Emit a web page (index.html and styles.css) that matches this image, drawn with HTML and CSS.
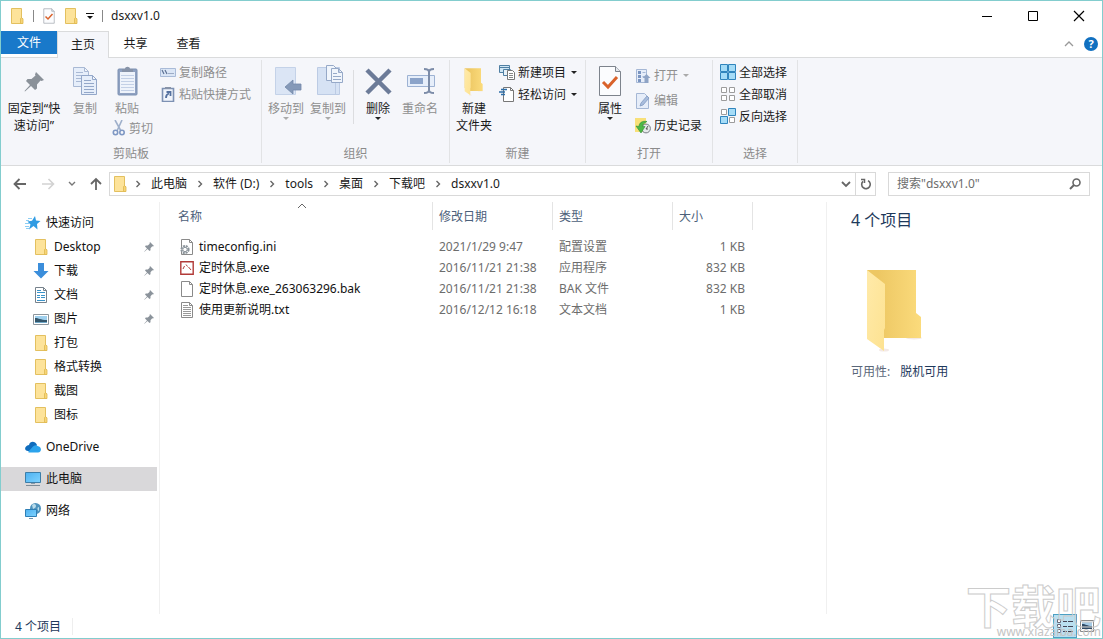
FILE: index.html
```html
<!DOCTYPE html>
<html lang="zh-CN">
<head>
    <meta charset="UTF-8">
    <meta name="viewport" content="width=device-width, initial-scale=1.0">
    <title>dsxxv1.0</title>
    <link rel="stylesheet" href="styles.css">
</head>
<body>
    <!-- shared icons -->
    <svg class="sprite" aria-hidden="true">
        <defs>
            <linearGradient id="gFolder" x1="0" y1="0" x2="1" y2="0">
                <stop offset="0.200" stop-color="#edc763"/>
                <stop offset="1" stop-color="#fbdb7c"/>
            </linearGradient>
            <linearGradient id="gFlap" x1="0" y1="0" x2="1" y2="1">
                <stop offset="0" stop-color="#ffeaa9"/>
                <stop offset="1" stop-color="#fde291"/>
            </linearGradient>
            <linearGradient id="gScreen" x1="0" y1="0" x2="1" y2="1">
                <stop offset="0" stop-color="#4db1f0"/>
                <stop offset="1" stop-color="#7fd3ff"/>
            </linearGradient>
            <symbol id="folder" viewBox="0 0 16 16">
                <path d="M2.500.500h10v9.500l1 1v4.500h-11z" fill="#fde39a" stroke="#e3c05f"/>
                <path d="M11.500 15v-4.500l1-.7 1.500 1v4.700h-2.500z" fill="#f7d578" stroke="#deb74f" stroke-width=".8"/>
            </symbol>
            <symbol id="bigfolder" viewBox="0 0 60 84">
                <ellipse cx="49" cy="69" rx="8" ry="1.500" fill="#f3e9e6"/>
                <ellipse cx="19" cy="81" rx="5" ry="1.500" fill="#f3e9e6"/>
                <path d="M2 1h49v43l5 4v21H18L2 60z" fill="url(#gFolder)"/>
                <path d="M2 1l18 14v44l-1 2v21L2 70z" fill="url(#gFlap)"/>
            </symbol>
            <symbol id="pin" viewBox="0 0 20 20">
                <path d="M12 0l8 8-2.500 1-1-.5-3.500 4v4l-2 1.500-4-4-6 5.500-.5-.5L6 13 2 9l1.500-2h4l4-3.500-.5-1z" fill="currentColor"/>
            </symbol>
            <symbol id="chevron" viewBox="0 0 8 8">
                <path d="M2.500 1l3 3-3 3" fill="none" stroke="currentColor" stroke-width="1.400"/>
            </symbol>
            <symbol id="page" viewBox="0 0 14 16">
                <path d="M1.500.5h8l3 3v12h-11z" fill="#fff" stroke="#8a8a8a"/>
                <path d="M9.500.5v3h3" fill="none" stroke="#8a8a8a"/>
            </symbol>
            <symbol id="check" viewBox="0 0 24 32">
                <path d="M1.500 1.500h16l5 5v24h-21z" fill="#fbfcfe" stroke="#7d838c"/>
                <path d="M17.500 1.500v5h5" fill="#e4e8ee" stroke="#7d838c"/>
                <path d="M5 17l5 5 9-10" fill="none" stroke="#d9622b" stroke-width="3"/>
            </symbol>
        </defs>
    </svg>

    <div class="window">
        <header class="titlebar">
            <svg class="ico" width="16" height="16"><use href="#folder"/></svg>
            <span class="bar"></span>
            <button class="quick" aria-label="属性"><svg width="14" height="16"><use href="#check"/></svg></button>
            <button class="quick" aria-label="新建文件夹"><svg width="16" height="16"><use href="#folder"/></svg></button>
            <button class="quick" aria-label="自定义快速访问工具栏">
                <svg width="8" height="8" viewBox="0 0 8 8"><path d="M0 1h8v1H0zM1 4h6L4 7z" fill="#111"/></svg>
            </button>
            <span class="bar"></span>
            <h1 class="title">dsxxv1.0</h1>
            <div class="window-buttons">
                <button aria-label="最小化"><svg width="12" height="12" viewBox="0 0 12 12"><path d="M1 6.500h10" stroke="#000"/></svg></button>
                <button aria-label="最大化"><svg width="12" height="12" viewBox="0 0 12 12"><path d="M1.500 1.500h9v9h-9z" fill="none" stroke="#000"/></svg></button>
                <button aria-label="关闭"><svg width="12" height="12" viewBox="0 0 12 12"><path d="M1 1l10 10M11 1L1 11" stroke="#000" stroke-width="1.200"/></svg></button>
            </div>
        </header>

        <nav class="tabs">
            <button class="tab file">文件</button>
            <button class="tab active">主页</button>
            <button class="tab">共享</button>
            <button class="tab">查看</button>
            <div class="tabs-right">
                <button aria-label="最小化功能区"><svg width="10" height="8" viewBox="0 0 10 8"><path d="M1 6l4-4 4 4" fill="none" stroke="#999" stroke-width="1.300"/></svg></button>
                <button class="help" aria-label="帮助">?</button>
            </div>
        </nav>

        <div class="ribbon">
            <section class="group">
                <div class="group-body">
                    <button class="big wide">
                        <svg width="32" height="32" viewBox="0 0 32 32" color="#8a9199"><use href="#pin" x="6" y="7" width="20" height="20"/></svg>
                        <span>固定到“快<br>速访问”</span>
                    </button>
                    <button class="big" disabled>
                        <svg width="32" height="32" viewBox="0 0 32 32">
                            <g fill="#e6eefa" stroke="#a9b9d4">
                                <path d="M4.500 2.500h11l4 4v15h-15zM15.500 2.500v4h4"/>
                                <path d="M7 7.500h7M7 10.500h9M7 13.500h9M7 16.500h9"/>
                                <path d="M12.500 10.500h11l4 4v15h-15zM23.500 10.500v4h4" stroke="#93a7c9"/>
                                <path d="M15 15.500h7M15 18.500h10M15 21.500h10M15 24.500h10M15 27.500h10" stroke="#93a7c9"/>
                            </g>
                        </svg>
                        <span>复制</span>
                    </button>
                    <div class="paste">
                        <button class="big" disabled>
                            <svg width="32" height="32" viewBox="0 0 32 32">
                                <rect x="7" y="4" width="19" height="26" rx="1" fill="#8fa1c1" stroke="#7d91b3"/>
                                <path d="M9 7h15v21H9z" fill="#eef3fb"/>
                                <path d="M10 10.500h13M10 13.500h13M10 16.500h13M10 19.500h13M10 22.500h13M10 25.500h13" stroke="#c3d0e6"/>
                                <path d="M11 7V4h3c0-3 5-3 5 0h3v3z" fill="#8793a8"/>
                            </svg>
                            <span>粘贴</span>
                        </button>
                        <button class="small" disabled>
                            <svg width="14" height="16" viewBox="0 0 14 16"><path d="M3 0l6 11M10 0L5 11" stroke="#9fb0cb" stroke-width="1.600"/><circle cx="3.500" cy="12.500" r="2.200" fill="none" stroke="#7f98c4" stroke-width="1.600"/><circle cx="10" cy="12.500" r="2.200" fill="none" stroke="#7f98c4" stroke-width="1.600"/></svg>
                            剪切
                        </button>
                    </div>
                    <div class="stack clip">
                        <button class="small" disabled>
                            <svg width="16" height="16" viewBox="0 0 16 16"><path d="M.5 4.500h15v8H.5z" fill="#dbe6f6" stroke="#a9bbd8"/><path d="M2 6l2 4M5 6l2 4" stroke="#5f7396" stroke-width="1.200"/><path d="M8.500 9.500h1M10.500 9.500h1M12.500 9.500h1" stroke="#5f7396"/></svg>
                            复制路径
                        </button>
                        <button class="small" disabled>
                            <svg width="16" height="16" viewBox="0 0 16 16"><path d="M2.500 2.500h11v13h-11z" fill="#f0f4fb" stroke="#7d91b3" stroke-width="1.600"/><path d="M5 1h6v2H5z" fill="#8793a8"/><path d="M6 12c0-3 1-4 3-4.500M6.500 6h4v4" fill="none" stroke="#55719f" stroke-width="1.800"/></svg>
                            粘贴快捷方式
                        </button>
                    </div>
                </div>
                <h2 class="group-name">剪贴板</h2>
            </section>

            <section class="group tight">
                <div class="group-body">
                    <button class="big" disabled>
                        <svg width="32" height="32" viewBox="0 0 32 32"><path d="M5.500 2.500h20v27h-20z" fill="#dbe5f5" stroke="#c4d2e8"/><path d="M15 22l8-7v4h8v6h-8v4z" fill="#8599b8" stroke="#7489aa" stroke-width=".8"/></svg>
                        <span>移动到</span>
                        <i class="caret"></i>
                    </button>
                    <button class="big" disabled>
                        <svg width="32" height="32" viewBox="0 0 32 32"><path d="M5.500 2.500h22v27h-22z" fill="#d6e2f4" stroke="#bccbe4"/><path d="M23.500 18v11" stroke="#bccbe4"/><g fill="#f0f5fc" stroke="#96a9c8"><path d="M14.500.5h7l3 3v12h-10z"/><path d="M19.500 3.500h7l4 4v10h-11zM26.500 3.500v4h4M21 8.500h4M21 11.500h8M21 14.500h8"/></g></svg>
                        <span>复制到</span>
                        <i class="caret"></i>
                    </button>
                    <span class="divider"></span>
                    <button class="big">
                        <svg width="32" height="32" viewBox="0 0 32 32"><path d="M5 5l23 23M28 5L5 28" stroke="#6c7b98" stroke-width="4.500"/></svg>
                        <span>删除</span>
                        <i class="caret"></i>
                    </button>
                    <button class="big" disabled>
                        <svg width="32" height="32" viewBox="0 0 32 32"><path d="M3.500 10.500h27v11h-27z" fill="#e6eefa" stroke="#9db2d3"/><path d="M6 13h13v6H6z" fill="#8ba3c9"/><path d="M20 4c4 0 5 1 5 3v18c0 2-1 3-5 3M30 4c-4 0-5 1-5 3v18c0 2 1 3 5 3" fill="none" stroke="#7c8ca8" stroke-width="2"/></svg>
                        <span>重命名</span>
                    </button>
                </div>
                <h2 class="group-name">组织</h2>
            </section>

            <section class="group tight">
                <div class="group-body">
                    <button class="big">
                        <svg width="32" height="32" viewBox="0 0 32 32"><use href="#bigfolder" x="5" y="3" width="22" height="28"/></svg>
                        <span>新建<br>文件夹</span>
                    </button>
                    <div class="stack">
                        <button class="small">
                            <svg width="16" height="16" viewBox="0 0 16 16"><path d="M.5 1.500h10v7H.5z" fill="#cfe6f5" stroke="#4f7fa3"/><path d="M.5 3.500h10" stroke="#4f7fa3"/><path d="M4.500 5.500h7v6h-7z" fill="#e8f2f9" stroke="#4f7fa3"/><path d="M8.500 6.500h5l2 2v7h-7z" fill="#fff" stroke="#777"/><path d="M10 9.500h4M10 11.500h4M10 13.500h4" stroke="#888"/></svg>
                            新建项目 <i class="caret"></i>
                        </button>
                        <button class="small">
                            <svg width="16" height="16" viewBox="0 0 16 16"><path d="M4.500 1.500h7l3 3v11h-10z" fill="#fff" stroke="#777"/><path d="M11.500 1.500v3h3" fill="none" stroke="#777"/><path d="M2 3.500h6M0 6h6M2 8.500h4" stroke="#2f6fa8" stroke-width="1.400"/></svg>
                            轻松访问 <i class="caret"></i>
                        </button>
                    </div>
                </div>
                <h2 class="group-name">新建</h2>
            </section>

            <section class="group">
                <div class="group-body">
                    <button class="big">
                        <svg width="24" height="32"><use href="#check"/></svg>
                        <span>属性</span>
                        <i class="caret"></i>
                    </button>
                    <div class="stack loose">
                        <button class="small" disabled>
                            <svg width="16" height="16" viewBox="0 0 16 16"><path d="M1.500 1.500h10v13h-10z" fill="#e6edf9" stroke="#a5b7d5"/><path d="M3 3h3v3H3zM3 7h3v3H3zM3 11h3v3H3z" fill="#7b95c1"/><path d="M7.500 4.500h3M7.500 8.500h2" stroke="#a5b7d5"/><path d="M11.500 6l4 4h-2v5h-4v-5h-2z" fill="#8fa4c6"/></svg>
                            打开 <i class="caret"></i>
                        </button>
                        <button class="small" disabled>
                            <svg width="16" height="16" viewBox="0 0 16 16"><path d="M1.500.5h8l4 4v11h-12z" fill="#e6edf9" stroke="#a5b7d5"/><path d="M5 13l1-3 6-7 2 2-6 7z" fill="#a9bddd" stroke="#8199c0" stroke-width=".8"/></svg>
                            编辑
                        </button>
                        <button class="small">
                            <svg width="16" height="16" viewBox="0 0 16 16"><path d="M0 0h11v14H0z" fill="#f8e079"/><circle cx="11" cy="10.500" r="4.400" fill="#e5e8ea" stroke="#777e84"/><path d="M11 11l2-3M11 11h2" stroke="#555"/><path d="M12 3.500C7 2.500 4 5 4 8.500L1 8l5 7 4-6.500H7.500c0-2 1.500-3.500 4.500-5z" fill="#4db848" stroke="#2d8f36" stroke-width=".6"/></svg>
                            历史记录
                        </button>
                    </div>
                </div>
                <h2 class="group-name">打开</h2>
            </section>

            <section class="group">
                <div class="group-body">
                    <div class="stack select">
                        <button class="small">
                            <svg width="16" height="16" viewBox="0 0 16 16"><path d="M.5.5h7v7h-7zM8.500.5h7v7h-7zM.5 8.500h7v7h-7zM8.500 8.500h7v7h-7z" fill="#a5dcf7" stroke="#3085bd"/></svg>
                            全部选择
                        </button>
                        <button class="small">
                            <svg width="16" height="16" viewBox="0 0 16 16"><path d="M1.500 1.500h5v5h-5zM9.500 1.500h5v5h-5zM1.500 9.500h5v5h-5zM9.500 9.500h5v5h-5z" fill="#fff" stroke="#9c9c9c"/></svg>
                            全部取消
                        </button>
                        <button class="small">
                            <svg width="16" height="16" viewBox="0 0 16 16"><path d="M1.500 1.500h5v5h-5zM9.500 9.500h5v5h-5z" fill="#fff" stroke="#9c9c9c"/><path d="M8.500.5h7v7h-7zM.5 8.500h7v7h-7z" fill="#a5dcf7" stroke="#3085bd"/></svg>
                            反向选择
                        </button>
                    </div>
                </div>
                <h2 class="group-name">选择</h2>
            </section>
        </div>

        <div class="address-row">
            <div class="nav-buttons">
                <button aria-label="后退"><svg width="14" height="12" viewBox="0 0 14 12"><path d="M13 6H2M6.500 1L1.500 6l5 5" fill="none" stroke="#666" stroke-width="1.800"/></svg></button>
                <button aria-label="前进" disabled><svg width="14" height="12" viewBox="0 0 14 12"><path d="M1 6h11M7.500 1l5 5-5 5" fill="none" stroke="#d2d2d2" stroke-width="1.600"/></svg></button>
                <button class="narrow" aria-label="最近浏览的位置"><svg width="8" height="6" viewBox="0 0 8 6"><path d="M1 1l3 3 3-3" fill="none" stroke="#777" stroke-width="1.400"/></svg></button>
                <button aria-label="上移"><svg width="12" height="14" viewBox="0 0 12 14"><path d="M6 13V2M1 7l5-5 5 5" fill="none" stroke="#666" stroke-width="1.800"/></svg></button>
            </div>
            <div class="address">
                <svg class="ico" width="16" height="16"><use href="#folder"/></svg>
                <svg class="sep" width="8" height="8"><use href="#chevron"/></svg>
                <a href="#">此电脑</a>
                <svg class="sep" width="8" height="8"><use href="#chevron"/></svg>
                <a href="#">软件 (D:)</a>
                <svg class="sep" width="8" height="8"><use href="#chevron"/></svg>
                <a href="#">tools</a>
                <svg class="sep" width="8" height="8"><use href="#chevron"/></svg>
                <a href="#">桌面</a>
                <svg class="sep" width="8" height="8"><use href="#chevron"/></svg>
                <a href="#">下载吧</a>
                <svg class="sep" width="8" height="8"><use href="#chevron"/></svg>
                <a href="#">dsxxv1.0</a>
                <button class="history" aria-label="上一个位置"><svg width="10" height="8" viewBox="0 0 10 8"><path d="M1 2l4 4 4-4" fill="none" stroke="#666" stroke-width="1.800"/></svg></button>
                <button class="refresh" aria-label="刷新"><svg width="12" height="12" viewBox="0 0 12 12"><path d="M8 2.600A4.300 4.300 0 1 1 3 3.300" fill="none" stroke="#666" stroke-width="1.600"/><path d="M1 1.500h3.500V5" fill="none" stroke="#666" stroke-width="1.500"/></svg></button>
            </div>
            <div class="search">
                <input type="text" aria-label="搜索" placeholder='搜索"dsxxv1.0"'>
                <button aria-label="开始搜索"><svg width="12" height="12" viewBox="0 0 12 12"><circle cx="7.500" cy="4.500" r="3.500" fill="none" stroke="#666" stroke-width="1.600"/><path d="M5 7L1 11" stroke="#666" stroke-width="2"/></svg></button>
            </div>
        </div>

        <div class="content">
            <nav class="sidebar">
                <a class="item" href="#">
                    <svg width="16" height="16" viewBox="0 0 16 16"><path d="M10 1l1 4.500 4.500.5-3.500 3 .5 5.500L8.500 11 4 14.500l1.500-5L2.500 6.500l4.500-.7z" fill="#2f9be3"/><path d="M3 3.500h4M1 5.500h3M0 8.500h4M0 11.500h4M1 13.500h3" stroke="#6fc0f0" stroke-width=".8"/></svg>
                    快速访问
                </a>
                <a class="item sub" href="#"><svg width="16" height="16"><use href="#folder"/></svg>Desktop<svg class="pin" width="10" height="10"><use href="#pin"/></svg></a>
                <a class="item sub" href="#">
                    <svg width="16" height="16" viewBox="0 0 16 16"><path d="M5 0h6v8h4.500L8 15.500.5 8H5z" fill="#3b8edb"/></svg>
                    下载<svg class="pin" width="10" height="10"><use href="#pin"/></svg>
                </a>
                <a class="item sub" href="#">
                    <svg width="16" height="16" viewBox="0 0 16 16"><path d="M2.500.5h8l3 3v12h-11z" fill="#fff" stroke="#77828c"/><path d="M10.500.5v3h3" fill="none" stroke="#77828c"/><path d="M4 3.500h4M4 5.500h8M4 8.500h3M8 8.500h4M4 10.500h3M8 10.500h4M4 13.500h8" stroke="#3a93c9"/></svg>
                    文档<svg class="pin" width="10" height="10"><use href="#pin"/></svg>
                </a>
                <a class="item sub" href="#">
                    <svg width="16" height="16" viewBox="0 0 16 16"><path d="M.5 3.500h15v10H.5z" fill="#fff" stroke="#8d969d"/><path d="M2 5h12v7H2z" fill="#9fd0ee"/><path d="M2 7c4 0 5 2 12 2v3H2z" fill="#34566b"/><path d="M2 11h12v1H2z" fill="#6fa8c9"/></svg>
                    图片<svg class="pin" width="10" height="10"><use href="#pin"/></svg>
                </a>
                <a class="item sub" href="#"><svg width="16" height="16"><use href="#folder"/></svg>打包</a>
                <a class="item sub" href="#"><svg width="16" height="16"><use href="#folder"/></svg>格式转换</a>
                <a class="item sub" href="#"><svg width="16" height="16"><use href="#folder"/></svg>截图</a>
                <a class="item sub" href="#"><svg width="16" height="16"><use href="#folder"/></svg>图标</a>
                <a class="item root" href="#">
                    <svg width="16" height="16" viewBox="0 0 16 16"><path d="M4 6C5 2 10 1.500 12 6l-4 6H3C-1 12-1 7 4 6z" fill="#0f6cbd"/><path d="M3 13l5-5.500C10 6 12 6 12.500 7 17 7.500 17 13 13 13.500H4z" fill="#2ba3ec"/></svg>
                    OneDrive
                </a>
                <a class="item root selected" href="#">
                    <svg width="16" height="16" viewBox="0 0 16 16"><path d="M.5 1.500h15v10H.5z" fill="url(#gScreen)" stroke="#3d7ea8"/><path d="M6 12h4v1H6z" fill="#8a9ba8"/><path d="M1 14.500h14" stroke="#7c8a95"/></svg>
                    此电脑
                </a>
                <a class="item root" href="#">
                    <svg width="16" height="16" viewBox="0 0 16 16"><circle cx="10.500" cy="5.500" r="5.500" fill="#4f93bd"/><path d="M7 2c2-2 4-1 4 1s-2 2-3 3zM14 4c-2 0-2 3 0 4z" fill="#b9dceb"/><path d="M.5 6.500h11v7H.5z" fill="url(#gScreen)" stroke="#2f7fb5"/><path d="M4 15.500h4" stroke="#6d93ad"/></svg>
                    网络
                </a>
            </nav>

            <main class="files">
                <table>
                    <thead>
                        <tr>
                            <th class="name">名称<svg class="sort" width="10" height="6" viewBox="0 0 10 6"><path d="M1 5l4-4 4 4" fill="none" stroke="#666"/></svg></th>
                            <th class="date">修改日期</th>
                            <th class="type">类型</th>
                            <th class="size">大小</th>
                        </tr>
                    </thead>
                    <tbody>
                        <tr>
                            <td><div class="file-name"><svg width="14" height="16" viewBox="0 0 14 16"><use href="#page" width="14" height="16"/><circle cx="5" cy="10.500" r="3.500" fill="#fff" stroke="#8c959c" stroke-width="2.200" stroke-dasharray="2 .8"/><circle cx="5" cy="10.500" r="2.200" fill="#fff" stroke="#8c959c"/></svg>timeconfig.ini</div></td>
                            <td>2021/1/29 9:47</td>
                            <td>配置设置</td>
                            <td>1 KB</td>
                        </tr>
                        <tr>
                            <td><div class="file-name"><svg width="14" height="16" viewBox="0 0 14 16"><path d="M.8 1.800h12.400v12.400H.8z" fill="#fff" stroke="#b23a38" stroke-width="1.400"/><path d="M3 9l1.500-3M6 4.500l1.500 2M8.500 7l2.500 3" fill="none" stroke="#b23a38"/></svg>定时休息.exe</div></td>
                            <td>2016/11/21 21:38</td>
                            <td>应用程序</td>
                            <td>832 KB</td>
                        </tr>
                        <tr>
                            <td><div class="file-name"><svg width="14" height="16"><use href="#page"/></svg>定时休息.exe_263063296.bak</div></td>
                            <td>2016/11/21 21:38</td>
                            <td>BAK 文件</td>
                            <td>832 KB</td>
                        </tr>
                        <tr>
                            <td><div class="file-name"><svg width="14" height="16" viewBox="0 0 14 16"><use href="#page" width="14" height="16"/><path d="M3 3.500h5M3 5.500h8M3 7.500h8M3 9.500h8M3 11.500h8M3 13.500h8" stroke="#999"/></svg>使用更新说明.txt</div></td>
                            <td>2016/12/12 16:18</td>
                            <td>文本文档</td>
                            <td>1 KB</td>
                        </tr>
                    </tbody>
                </table>
            </main>

            <aside class="details">
                <h2>4 个项目</h2>
                <svg class="preview" width="60" height="84"><use href="#bigfolder"/></svg>
                <dl>
                    <dt>可用性:</dt>
                    <dd>脱机可用</dd>
                </dl>
            </aside>
        </div>

        <footer class="status">
            <span class="count">4 个项目</span>
            <div class="views">
                <button class="view on" aria-label="详细信息"><svg width="18" height="16" viewBox="0 0 18 16"><path d="M1.500 1.500h3v3h-3zM1.500 6.500h3v3h-3zM1.500 11.500h3v3h-3z" fill="#fff" stroke="#667"/><path d="M7 3.500h4M12 3.500h5M7 8.500h4M12 8.500h5M7 13.500h4M12 13.500h5" stroke="#445"/></svg></button>
                <button class="view" aria-label="大图标"><svg width="14" height="12" viewBox="0 0 14 12"><path d="M.5.5h13v11H.5z" fill="#fff" stroke="#888"/><path d="M2 2h10v7H2z" fill="#a5cbe6"/><path d="M2 4c4 0 5 2 10 2v3H2z" fill="#2e4a66"/></svg></button>
            </div>
        </footer>

        <div class="watermark">
            <span class="mark">下载吧</span>
            <span class="url">www.xiazaiba.com</span>
        </div>
    </div>
</body>
</html>
```
FILE: styles.css
```css
* {
    box-sizing: border-box;
}
body {
    margin: 0;
    font-family: "Noto Sans", "Noto Sans CJK SC", sans-serif;
    font-size: 12px;
    line-height: 17px;
    color: #1a1a1a;
    background-color: #fff;
}
button {
    margin: 0;
    padding: 0;
    border: 0;
    background: none;
    font: inherit;
    color: inherit;
}
a {
    color: inherit;
    text-decoration: none;
}
h1, h2, dl, dd {
    margin: 0;
    font-size: inherit;
    font-weight: normal;
}
svg {
    display: block;
    flex: none;
}
.sprite {
    position: absolute;
    width: 0;
    height: 0;
}
.window {
    position: relative;
    display: flex;
    flex-direction: column;
    min-height: 100vh;
    border: 1px solid #83cdce;
    overflow: hidden;
}

/* title bar */
.titlebar {
    display: flex;
    align-items: center;
    gap: 8px;
    height: 30px;
    padding-bottom: 1px;
    padding-left: 8px;
}
.bar {
    width: 1px;
    height: 12px;
    background-color: #888;
}
.quick + .quick {
    margin-left: -1px;
}
.window-buttons {
    display: flex;
    margin-left: auto;
}
.window-buttons button {
    display: flex;
    justify-content: center;
    width: 46px;
}

/* tabs */
.tabs {
    display: flex;
    height: 26px;
}
.tab {
    width: 53px;
    height: 26px;
    padding-bottom: 2px;
}
.tab.file {
    width: 56px;
    height: 23px;
    padding-bottom: 0;
    color: #fff;
    background-color: #1979ca;
}
.tab.active {
    position: relative;
    width: 52px;
    height: 27px;
    border: 1px solid #dadbdc;
    border-bottom: 0;
    background-color: #f5f6fa;
    z-index: 1;
}
.tabs-right {
    display: flex;
    align-items: center;
    gap: 10px;
    margin-left: auto;
    padding-right: 4px;
}
.help {
    width: 14px;
    height: 14px;
    border-radius: 50%;
    background-color: #1170c0;
    color: #fff;
    font-size: 11px;
    font-weight: bold;
    line-height: 14px;
}

/* ribbon */
.ribbon {
    display: flex;
    height: 109px;
    border-top: 1px solid #dadbdc;
    border-bottom: 1px solid #dadbdc;
    background-color: #f5f6fa;
}
.group {
    display: flex;
    flex-direction: column;
    justify-content: space-between;
    margin: 2px 0;
    padding-bottom: 1px;
    border-right: 1px solid #e2e3e5;
}
.group-body {
    display: flex;
    padding: 0 10px 0 3px;
}
.group.tight .group-body {
    padding-right: 8px;
}
.group-name {
    color: #8b8b8b;
    text-align: center;
}
.big {
    display: flex;
    flex-direction: column;
    align-items: center;
    width: 42px;
    padding-top: 5px;
    white-space: nowrap;
}
.big span {
    margin-top: 3px;
}
.big.wide {
    width: 60px;
}
.ribbon button:disabled {
    color: #8f8f8f;
}
.small {
    display: flex;
    align-items: center;
    gap: 3px;
    height: 22px;
    white-space: nowrap;
}
.small .caret {
    margin-left: 2px;
}
.caret {
    width: 0;
    border: 3px solid transparent;
    border-top-color: #222;
    border-bottom: 0;
}
button:disabled .caret {
    border-top-color: #aaa;
}
.stack {
    margin: 1px 0 0 4px;
}
.stack.clip {
    margin-left: 7px;
}
.stack.loose .small {
    height: 25px;
}
.stack.loose {
    margin-top: 3px;
}
.paste .small {
    height: 20px;
    margin: 1px 0 0 6px;
}
.divider {
    width: 1px;
    height: 54px;
    margin: 10px 3px 0 4px;
    background-color: #dcdde0;
}

/* address row */
.address-row {
    display: flex;
    height: 36px;
    padding: 6px 12px 6px 6px;
}
.nav-buttons {
    display: flex;
    align-items: center;
    width: 102px;
}
.nav-buttons button {
    display: flex;
    justify-content: center;
    width: 26px;
}
.nav-buttons button + button {
    margin-left: 2px;
}
.nav-buttons .narrow {
    width: 18px;
}
.address {
    display: flex;
    flex: 1;
    align-items: center;
    padding-left: 2px;
    border: 1px solid #d9d9d9;
    white-space: nowrap;
}
.address a {
    padding-bottom: 2px;
}
.address .sep {
    margin: 0 9px;
    color: #666;
}
.address .ico + .sep {
    margin-left: 6px;
}
.history {
    margin-left: auto;
    padding: 0 4px;
}
.refresh {
    align-self: stretch;
    padding: 0 3px 0 4px;
    border-left: 1px solid #d9d9d9;
}
.search {
    display: flex;
    align-items: center;
    width: 202px;
    margin-left: 12px;
    padding: 0 8px;
    border: 1px solid #d9d9d9;
}
.search input {
    flex: 1;
    min-width: 0;
    padding: 0 0 2px;
    border: 0;
    outline: 0;
    background: none;
    font: inherit;
}
.search input::placeholder {
    color: #6d6d6d;
}

/* content */
.content {
    display: flex;
    flex: 1;
}
.sidebar {
    width: 159px;
    padding: 9px 2px 0 0;
    border-right: 1px solid #f0f0f0;
}
.item {
    display: flex;
    align-items: center;
    gap: 5px;
    height: 24px;
    padding: 0 0 1px 24px;
    color: #111;
}
.item.sub {
    padding-left: 32px;
}
.item.root {
    margin-top: 8px;
}
.item.selected {
    background-color: #d9d8da;
}
.pin {
    margin: 0 3px 0 auto;
    color: #8b939b;
}
.files {
    flex: 1;
    padding-left: 12px;
}
table {
    table-layout: fixed;
    width: 581px;
    border-spacing: 0;
}
th {
    position: relative;
    height: 28px;
    padding: 0 6px;
    border-right: 1px solid #e4e4e4;
    color: #4c607a;
    font-weight: normal;
    text-align: left;
}
.name {
    width: 261px;
}
.date, .type {
    width: 120px;
}
.sort {
    position: absolute;
    top: 1px;
    left: calc(50% - 5px);
}
tbody::before {
    content: "";
    display: block;
    height: 6px;
}
td {
    height: 21px;
    padding: 0 6px;
    color: #6d6d6d;
}
td:last-child {
    padding-right: 8px;
    text-align: right;
}
.file-name {
    display: flex;
    align-items: center;
    gap: 5px;
    padding-left: 2px;
    color: #111;
}
.details {
    width: 276px;
    padding: 6px 0 0 24px;
    border-left: 1px solid #f0f0f0;
    color: #1e395b;
}
.details h2 {
    font-size: 16px;
    line-height: 24px;
}
.preview {
    margin: 37px 0 10px 14px;
}
.details dl {
    display: flex;
    gap: 10px;
}
.details dt {
    color: #5a6779;
}

/* status bar */
.status {
    display: flex;
    align-items: center;
    height: 24px;
    padding: 0 5px 0 14px;
    color: #1e395b;
}
.count {
    padding-right: 11px;
    border-right: 1px solid #eee;
}
.views {
    display: flex;
    margin-left: auto;
}
.view {
    display: flex;
    align-items: center;
    justify-content: center;
    width: 20px;
    height: 24px;
}
.view.on {
    width: 24px;
    border: 1px solid #4ba0c4;
    background-color: #b9dff0;
}
.watermark {
    position: absolute;
    right: 1px;
    bottom: 0;
    text-align: right;
    pointer-events: none;
}
.watermark span {
    display: block;
}
.mark {
    color: transparent;
    font-size: 45px;
    font-weight: bold;
    line-height: 62px;
    -webkit-text-stroke: 1px #ccc;
}
.url {
    position: absolute;
    right: 0;
    bottom: 0;
    color: #c4c4c4;
    font-size: 12px;
    line-height: 12px;
}
```
